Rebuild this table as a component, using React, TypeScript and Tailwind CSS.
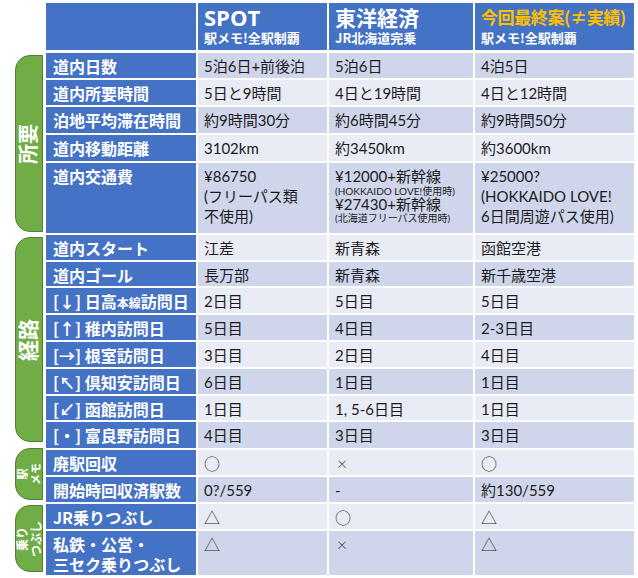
import type { ReactNode } from "react";

const widths = ["w-[129px]", "w-[144px]", "w-[159px]"];

const Row = ({
  label,
  cells,
  h,
  dark,
}: {
  label: ReactNode;
  cells: ReactNode[];
  h: string;
  dark?: boolean;
}) => (
  <div className={`flex gap-[2px] ${h}`}>
    <div className="w-[150px] shrink-0 bg-[#4472C4] px-[7px] pt-[3px] font-['Noto_Sans_CJK_JP',sans-serif] text-[16px] font-bold leading-[20px] whitespace-nowrap text-white">
      {label}
    </div>
    {cells.map((c, i) => (
      <div
        key={i}
        className={`${widths[i]} shrink-0 ${dark ? "bg-[#CFD5EA]" : "bg-[#E9EBF5]"} px-[6px] pt-[3px] text-[15px] leading-[20px] whitespace-nowrap text-[#1c1c1c]`}
      >
        {c}
      </div>
    ))}
  </div>
);

const Tab = ({ children, className }: { children: ReactNode; className: string }) => (
  <div
    className={`ml-[15px] flex w-[28px] shrink-0 items-center justify-center rounded-l-[15px] border border-[#507E32] bg-[#70AD47] ${className}`}
  >
    <div className="-rotate-90 text-center font-['Noto_Sans_CJK_JP',sans-serif] font-bold whitespace-nowrap text-white">
      {children}
    </div>
  </div>
);

const Small = ({ children }: { children: ReactNode }) => (
  <span className="text-[12px]">{children}</span>
);

// marks drawn with the CJK font so they come out full width like the original
const Mark = ({ children }: { children: ReactNode }) => (
  <span className="font-['Noto_Sans_CJK_JP',sans-serif] text-[16px] font-light">{children}</span>
);

const Cross = () => (
  <span className="pl-[1px] font-['Noto_Sans_CJK_JP',sans-serif] text-[12px] font-light">×</span>
);

export default function App() {
  return (
    <div className="h-[578px] w-[638px] overflow-hidden bg-white pt-[3px] font-['Lato','Noto_Sans_CJK_JP',sans-serif]">
      {/* header */}
      <div className="ml-[46px] flex h-[47px] gap-[2px] font-['Noto_Sans_CJK_JP',sans-serif] font-bold text-white">
        <div className="w-[150px] shrink-0 bg-[#4472C4]" />
        <div className="w-[129px] shrink-0 bg-[#4472C4] px-[6px] pt-[1px]">
          <div className="font-['Open_Sans',sans-serif] text-[22px] leading-[26px]">SPOT</div>
          <div className="text-[13px] leading-[16px]">駅メモ!全駅制覇</div>
        </div>
        <div className="w-[144px] shrink-0 bg-[#4472C4] px-[6px] pt-[1px]">
          <div className="text-[21px] leading-[26px]">東洋経済</div>
          <div className="text-[13px] leading-[16px]">JR北海道完乗</div>
        </div>
        <div className="w-[159px] shrink-0 bg-[#4472C4] px-[6px] pt-[1px]">
          <div className="text-[17px] leading-[26px] tracking-[-0.4px] whitespace-nowrap text-[#FFC000]">
            今回最終案(≠実績)
          </div>
          <div className="text-[13px] leading-[16px]">駅メモ!全駅制覇</div>
        </div>
      </div>

      <div className="mt-[3px] flex flex-col gap-[2px]">
        {/* 所要 */}
        <div className="flex gap-[3px]">
          <Tab className="mt-[2px] mb-[1px]">
            <span className="text-[20px] leading-none">所要</span>
          </Tab>
          <div className="flex flex-col gap-[2px]">
            <Row dark h="h-[25px]" label="道内日数" cells={["5泊6日+前後泊", "5泊6日", "4泊5日"]} />
            <Row h="h-[25px]" label="道内所要時間" cells={["5日と9時間", "4日と19時間", "4日と12時間"]} />
            <Row dark h="h-[26px]" label="泊地平均滞在時間" cells={["約9時間30分", "約6時間45分", "約9時間50分"]} />
            <Row h="h-[26px]" label="道内移動距離" cells={["3102km", "約3450km", "約3600km"]} />
            <Row
              dark
              h="h-[70px]"
              label="道内交通費"
              cells={[
                <>
                  ¥86750
                  <br />
                  (フリーパス類
                  <br />
                  不使用)
                </>,
                <>
                  <div>¥12000+新幹線</div>
                  <div className="text-[10px] leading-[11px]">(HOKKAIDO LOVE!使用時)</div>
                  <div className="leading-[14px]">¥27430+新幹線</div>
                  <div className="text-[10px] leading-[14px]">(北海道フリーパス使用時)</div>
                </>,
                <>
                  ¥25000?
                  <br />
                  (HOKKAIDO LOVE!
                  <br />
                  6日間周遊パス使用)
                </>,
              ]}
            />
          </div>
        </div>

        {/* 経路 */}
        <div className="flex gap-[3px]">
          <Tab className="mt-[2px] mb-[6px]">
            <span className="text-[21px] leading-none">経路</span>
          </Tab>
          <div className="flex flex-col gap-[2px]">
            <Row h="h-[25px]" label="道内スタート" cells={["江差", "新青森", "函館空港"]} />
            <Row dark h="h-[24px]" label="道内ゴール" cells={["長万部", "新青森", "新千歳空港"]} />
            <Row
              h="h-[25px]"
              label={
                <>
                  [↓] 日高<Small>本線</Small>訪問日
                </>
              }
              cells={["2日目", "5日目", "5日目"]}
            />
            <Row dark h="h-[25px]" label="[↑] 稚内訪問日" cells={["5日目", "4日目", "2-3日目"]} />
            <Row h="h-[25px]" label="[→] 根室訪問日" cells={["3日目", "2日目", "4日目"]} />
            <Row dark h="h-[25px]" label="[↖] 倶知安訪問日" cells={["6日目", "1日目", "1日目"]} />
            <Row h="h-[24px]" label="[↙] 函館訪問日" cells={["1日目", "1, 5-6日目", "1日目"]} />
            <Row dark h="h-[26px]" label="[・] 富良野訪問日" cells={["4日目", "3日目", "3日目"]} />
          </div>
        </div>

        {/* 駅メモ */}
        <div className="flex gap-[3px]">
          <Tab className="-mt-[2px] mb-[2px]">
            <div className="text-[11px] leading-[13px]">
              駅<br />メモ
            </div>
          </Tab>
          <div className="flex flex-col gap-[2px]">
            <Row h="h-[25px]" label="廃駅回収" cells={[<Mark>○</Mark>, <Cross />, <Mark>○</Mark>]} />
            <Row dark h="h-[25px]" label="開始時回収済駅数" cells={["0?/559", "-", "約130/559"]} />
          </div>
        </div>

        {/* 乗りつぶし */}
        <div className="flex gap-[3px]">
          <Tab className="mt-[1px] mb-[3px]">
            <div className="text-[12px] leading-[14px]">
              乗り<br />つぶし
            </div>
          </Tab>
          <div className="flex flex-col gap-[2px]">
            <Row h="h-[25px]" label="JR乗りつぶし" cells={[<Mark>△</Mark>, <Mark>○</Mark>, <Mark>△</Mark>]} />
            <Row
              dark
              h="h-[44px]"
              label={
                <>
                  私鉄・公営・
                  <br />
                  三セク乗りつぶし
                </>
              }
              cells={[<Mark>△</Mark>, <Cross />, <Mark>△</Mark>]}
            />
          </div>
        </div>
      </div>
    </div>
  );
}
